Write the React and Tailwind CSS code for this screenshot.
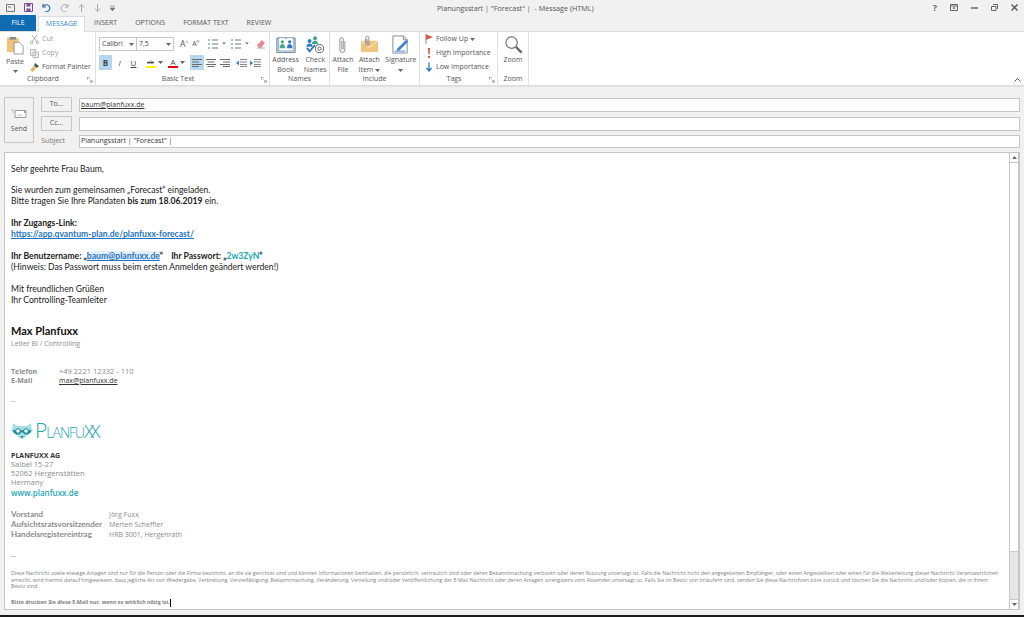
import React from 'react';

const Caret = ({ className = "" }) => (
    <svg width="5" height="3" viewBox="0 0 5 3" className={className}><path d="M0 0h5L2.5 3z" fill="#666" /></svg>
);

// Small launcher in the corner of a ribbon group
const Launcher = () => (
    <svg width="6" height="6" viewBox="0 0 7 7" className="absolute right-[2px] bottom-[2px]">
        <path d="M0.5 3V0.5H3M3 3l3 3M6 3.5V6H3.5" fill="none" stroke="#777" strokeWidth="0.8" />
    </svg>
);

const RibbonGroup = ({ label, width, launcher, children }) => (
    <div className={`relative flex flex-col h-full border-r border-[#e1e1e1] ${width}`}>
        <div className="flex-1 min-h-0">{children}</div>
        <div className={`h-[11px] text-center text-[7px] leading-[10px] text-[#555] ${launcher ? "pr-[9px]" : ""}`}>{label}</div>
        {launcher && <Launcher />}
    </div>
);

const BigLabel = ({ children, caret }) => (
    <div className="text-center text-[7px] leading-[10px] text-[#555] whitespace-nowrap">
        {children}
        {caret && <Caret className="inline ml-[2px] align-middle" />}
    </div>
);

const AddressBookIcon = () => (
    <svg width="20" height="17" viewBox="0 0 22 18">
        <path d="M1 2h20v16H1z" fill="#dce6ee" stroke="#4d6f8f" />
        <path d="M3 1.500h7.500L11 3l.5-1.500H19V16h-7.500L11 17l-.5-1H3z" fill="#fff" stroke="#6d8ba5" strokeWidth="0.7" />
        <circle cx="7" cy="6" r="1.800" fill="#4aa38c" /><path d="M4 13c0-6 6-6 6 0z" fill="#4aa38c" />
        <circle cx="15" cy="6" r="1.800" fill="#3578c4" /><path d="M12 13c0-6 6-6 6 0z" fill="#3578c4" />
    </svg>
);

const CheckNamesIcon = () => (
    <svg width="20" height="20" viewBox="0 0 22 22">
        <circle cx="11" cy="3.500" r="2.200" fill="#3fa58a" /><path d="M7.500 10c0-5 7-5 7 0z" fill="#3fa58a" />
        <circle cx="5" cy="6.500" r="2.200" fill="#2f7cc7" /><path d="M1.500 13c0-5 7-5 7 0z" fill="#2f7cc7" />
        <path d="M2 14l3 4 6-7" fill="none" stroke="#2f6fb2" strokeWidth="2" />
        <circle cx="16" cy="15" r="4.500" fill="none" stroke="#555" /><circle cx="16" cy="15" r="1.800" fill="none" stroke="#555" />
    </svg>
);

const ClipIcon = () => (
    <svg width="11" height="20" viewBox="0 0 14 24">
        <path d="M10 7v11a3.200 3.200 0 0 1-6.400 0V5a2.200 2.200 0 0 1 4.400 0v11a1 1 0 0 1-2 0V7" fill="none" stroke="#9a9a9a" strokeWidth="1.300" />
    </svg>
);

const EnvelopeClipIcon = () => (
    <svg width="19" height="19" viewBox="0 0 20 20">
        <path d="M1 6h18v12H1z" fill="#f0c47c" />
        <path d="M1 6l9 7 9-7" fill="none" stroke="#fff" strokeWidth="0.8" />
        <path d="M6 11V3a1.700 1.700 0 0 1 3.400 0v7a1 1 0 0 1-2 0V4" fill="none" stroke="#8a8a8a" />
    </svg>
);

const SignatureIcon = () => (
    <svg width="19" height="19" viewBox="0 0 20 20">
        <path d="M2 1h11l4 4v14H2z" fill="#fff" stroke="#7c8a96" />
        <path d="M13 1v4h4" fill="none" stroke="#7c8a96" />
        <path d="M7 14L16 5l2 2-9 9-3 1z" fill="#3e84cc" />
        <path d="M4 17h11" stroke="#3e84cc" />
    </svg>
);

const ZoomIcon = () => (
    <svg width="19" height="19" viewBox="0 0 20 20">
        <circle cx="8" cy="8" r="6" fill="#fff" stroke="#777" strokeWidth="1.300" />
        <path d="M12.500 12.500L18.500 18.500" stroke="#666" strokeWidth="2.400" />
    </svg>
);

const PasteIcon = () => (
    <svg width="18" height="20" viewBox="0 0 20 22">
        <path d="M1 3h13v16H1z" fill="#eec47f" />
        <path d="M4 2h7v3H4z" fill="#8a8a8a" />
        <path d="M9 8h6l4 4v9H9z" fill="#fff" stroke="#777" strokeWidth="0.8" />
    </svg>
);

const lineIcon = (rows) => rows.map((r, i) => (
    <path key={i} d={`M${r[0]} ${r[1]}h${r[2]}`} stroke="#6a6a6a" strokeWidth="1" />
));

const Align = ({ rows, active }) => (
    <div className={`w-[14px] h-[15px] flex items-center justify-center ${active ? "bg-[#b5d7f0]" : ""}`}>
        <svg width="10" height="8" viewBox="0 0 10 8">{lineIcon(rows)}</svg>
    </div>
);

const Clipboard = () => (
    <div className="flex pl-[4px]">
        <div className="w-[22px] flex flex-col items-center pt-[3px]">
            <PasteIcon />
            <div className="text-[7px] leading-[10px] text-[#555] mt-[2px]">Paste</div>
            <Caret className="mt-[3px]" />
        </div>
        <div className="ml-[4px] text-[7px] text-[#555] flex flex-col whitespace-nowrap">
            <div className="flex items-center h-[14px] gap-[3px] text-[#9d9d9d]">
                <svg width="9" height="9" viewBox="0 0 9 9"><path d="M2 0l5 7M7 0L2 7" stroke="#aaa" /><circle cx="1.500" cy="7.500" r="1.300" fill="none" stroke="#aaa" /><circle cx="7.500" cy="7.500" r="1.300" fill="none" stroke="#aaa" /></svg>
                Cut
            </div>
            <div className="flex items-center h-[14px] gap-[3px] text-[#9d9d9d]">
                <svg width="9" height="9" viewBox="0 0 9 9"><path d="M.5.5h5v6h-5zM3 3h5.500v5.500H3z" fill="#eee" stroke="#bbb" /></svg>
                Copy
            </div>
            <div className="flex items-center h-[14px] gap-[3px]">
                <svg width="9" height="9" viewBox="0 0 9 9"><path d="M5 0l4 3-2 2-3-2z" fill="#555" /><path d="M4 3l2 2-3 4-3-2z" fill="#e8b45f" /></svg>
                Format Painter
            </div>
        </div>
    </div>
);

const BasicText = () => (
    <div className="flex flex-col pl-[3px] pt-[5px]">
        <div className="flex items-center h-[14px]">
            <div className="w-[38px] h-[14px] border border-[#c6c6c6] flex items-center justify-between px-[2px] text-[7px] text-[#444]">Calibri<Caret /></div>
            <div className="w-[37px] h-[14px] border border-[#c6c6c6] border-l-0 flex items-center justify-between px-[2px] text-[7px] text-[#444]">7,5<Caret /></div>
            <span className="ml-[6px] text-[8.500px] text-[#555]">A<sup className="text-[5px]">^</sup></span>
            <span className="ml-[4px] text-[7px] text-[#555]">A<sup className="text-[5px]">v</sup></span>
            <svg width="44" height="10" viewBox="0 0 44 10" className="ml-[8px]">
                <path d="M1 1h2M1 5h2M1 9h2" stroke="#3d7cc0" />
                <path d="M5 1h6M5 5h6M5 9h6" stroke="#777" />
                <path d="M15 3.500h4l-2 2z" fill="#777" />
                <path d="M24 1h2M24 5h2M24 9h2" stroke="#3d7cc0" />
                <path d="M28 1h6M28 5h6M28 9h6" stroke="#777" />
                <path d="M38 3.500h4l-2 2z" fill="#777" />
            </svg>
            <svg width="10" height="10" viewBox="0 0 10 10" className="ml-[5px]"><path d="M1 6l5-5 3 3-4 5H3z" fill="#e98a9a" /><path d="M1 9h8" stroke="#aaa" /></svg>
        </div>
        <div className="flex items-center h-[15px] mt-[4px] text-[8px] text-[#444]">
            <div className="w-[13px] h-[15px] bg-[#b5d7f0] flex items-center justify-center font-bold">B</div>
            <div className="w-[13px] ml-[1px] text-center italic">I</div>
            <div className="w-[13px] ml-[1px] text-center underline">U</div>
            <div className="ml-[5px] w-[11px] flex flex-col items-center">
                <span className="text-[6px] leading-[8px] line-through text-[#555]">ab</span>
                <span className="w-[10px] h-[2px] bg-[#fff200]" />
            </div>
            <Caret className="ml-[2px]" />
            <div className="ml-[5px] w-[10px] flex flex-col items-center">
                <span className="text-[8px] leading-[9px] text-[#444]">A</span>
                <span className="w-[10px] h-[2px] bg-[#e8000f]" />
            </div>
            <Caret className="ml-[2px]" />
            <div className="ml-[5px]">
                <Align active rows={[[0, .5, 10], [0, 3, 7], [0, 5.5, 10], [0, 7.5, 7]]} />
            </div>
            <Align rows={[[0, .5, 10], [1.500, 3, 7], [0, 5.500, 10], [1.500, 7.500, 7]]} />
            <Align rows={[[0, .5, 10], [3, 3, 7], [0, 5.500, 10], [3, 7.500, 7]]} />
            <svg width="28" height="8" viewBox="0 0 28 8" className="ml-[4px]">
                <path d="M4 .5h7M4 3h7M4 5.500h7M4 7.500h7" stroke="#888" />
                <path d="M0 4l3-2.500v5z" fill="#3d7cc0" />
                <path d="M18 .5h7M18 3h7M18 5.500h7M18 7.500h7" stroke="#888" />
                <path d="M17 4l-3-2.500v5z" fill="#3d7cc0" />
            </svg>
        </div>
    </div>
);

const Tags = () => (
    <div className="flex flex-col pl-[5px] text-[7px] text-[#555] whitespace-nowrap">
        <div className="flex items-center h-[14px] gap-[3px]">
            <svg width="8" height="10" viewBox="0 0 8 10"><path d="M1 0v10" stroke="#888" /><path d="M1 .5l7 2.500-7 3z" fill="#d9573f" /></svg>
            Follow Up<Caret className="-ml-[1px]" />
        </div>
        <div className="flex items-center h-[14px] gap-[3px]">
            <svg width="8" height="10" viewBox="0 0 8 10"><path d="M3 0h2L4.600 6.500H3.400zM3 8h2v2H3z" fill="#d9573f" /></svg>
            High Importance
        </div>
        <div className="flex items-center h-[14px] gap-[3px]">
            <svg width="8" height="10" viewBox="0 0 8 10"><path d="M4 .5v8M1.500 6L4 9l2.500-3" fill="none" stroke="#2f74bd" strokeWidth="1.300" /></svg>
            Low Importance
        </div>
    </div>
);

const Big = ({ icon, children, caret }) => (
    <div className="flex flex-col items-center">
        <div className="h-[21px] flex items-center justify-center">{icon}</div>
        <BigLabel caret={caret}>{children}</BigLabel>
    </div>
);

const Ribbon = () => (
    <div className="relative h-[55px] bg-white border-y border-[#dcdcdc] flex shadow-[0_1px_1px_#e4e4e4] shrink-0">
        <RibbonGroup label="Clipboard" width="w-[96px]" launcher><Clipboard /></RibbonGroup>
        <RibbonGroup label="Basic Text" width="w-[174px]" launcher><BasicText /></RibbonGroup>
        <RibbonGroup label="Names" width="w-[60px]">
            <div className="flex justify-center gap-[5px] pt-[2px]">
                <Big icon={<AddressBookIcon />}>Address<br />Book</Big>
                <Big icon={<CheckNamesIcon />}>Check<br />Names</Big>
            </div>
        </RibbonGroup>
        <RibbonGroup label="Include" width="w-[90px]">
            <div className="flex justify-center gap-[5px] pt-[2px]">
                <Big icon={<ClipIcon />}>Attach<br />File</Big>
                <Big icon={<EnvelopeClipIcon />} caret>Attach<br />Item</Big>
                <Big icon={<SignatureIcon />}>Signature<br /><Caret className="inline" /></Big>
            </div>
        </RibbonGroup>
        <RibbonGroup label="Tags" width="w-[78px]" launcher><Tags /></RibbonGroup>
        <RibbonGroup label="Zoom" width="w-[31px]">
            <div className="flex justify-center pt-[2px]"><Big icon={<ZoomIcon />}>Zoom</Big></div>
        </RibbonGroup>
        <svg width="7" height="4" viewBox="0 0 7 4" className="absolute right-[3px] bottom-[3px]"><path d="M.5 3.500l3-3 3 3" fill="none" stroke="#555" /></svg>
    </div>
);

const TitleBar = () => (
    <div className="relative h-[15px] flex items-center px-[6px] shrink-0">
        <div className="flex items-center gap-[9px]">
            <svg width="9" height="8" viewBox="0 0 9 8"><path d="M.5.5h8v7h-8z" fill="#eee" stroke="#777" /><path d="M2 3h3" stroke="#777" /></svg>
            <svg width="9" height="9" viewBox="0 0 9 9"><path d="M.5.5h8v8h-8z" fill="none" stroke="#7d4a9c" /><path d="M2.500 1h4v2.500h-4zM2.500 5.500h4v3h-4z" fill="#7d4a9c" /></svg>
            <svg width="9" height="9" viewBox="0 0 9 9"><path d="M1 4a3.500 3.500 0 1 1 2 4.500M1 1v3h3" fill="none" stroke="#2f6fb2" strokeWidth="1.200" /></svg>
            <svg width="9" height="9" viewBox="0 0 9 9"><path d="M8 4a3.500 3.500 0 1 0-2 4.500M8 1v3H5" fill="none" stroke="#aaa" /></svg>
            <svg width="7" height="8" viewBox="0 0 7 8"><path d="M3.500 8V1M1 3.500l2.500-3 2.500 3" fill="none" stroke="#aaa" /></svg>
            <svg width="7" height="8" viewBox="0 0 7 8"><path d="M3.500 0v7M1 4.500l2.500 3 2.500-3" fill="none" stroke="#aaa" /></svg>
            <svg width="5" height="6" viewBox="0 0 5 6"><path d="M0 1h5M0 3h5l-2.500 3z" stroke="#777" fill="#777" strokeWidth="0.6" /></svg>
        </div>
        <div className="absolute left-[437px] top-[1px] text-[7.200px] leading-[14px] text-[#555] whitespace-pre">Planungsstart | "Forecast" |  - Message (HTML)</div>
        <div className="ml-auto flex items-center gap-[13px] text-[#666]">
            <span className="text-[9px] font-bold leading-[9px]">?</span>
            <svg width="8" height="7" viewBox="0 0 8 7"><path d="M.5.5h7v6h-7z" fill="none" stroke="#666" /><path d="M.5 2h7" stroke="#666" /><path d="M4 3v2M3 4h2" stroke="#666" /></svg>
            <svg width="7" height="2" viewBox="0 0 7 2"><path d="M0 1h7" stroke="#666" strokeWidth="1.500" /></svg>
            <svg width="7" height="7" viewBox="0 0 7 7"><path d="M2 .5h4.500v4.500M.5 2.500h4.500v4h-4.500z" fill="none" stroke="#666" /></svg>
            <svg width="7" height="7" viewBox="0 0 7 7"><path d="M.5.5l6 6M6.500.5l-6 6" stroke="#555" strokeWidth="1.400" /></svg>
        </div>
    </div>
);

const TabBar = () => (
    <div className="flex h-[16px] items-end text-[7px] text-[#555] shrink-0">
        <div className="w-[36px] h-[16px] bg-[#0f6cb3] text-white flex items-center justify-center">FILE</div>
        <div className="ml-[2px] w-[47px] h-[16px] -mb-[1px] bg-white border border-b-0 border-[#dcdcdc] text-[#2f86d0] flex items-center justify-center z-10">MESSAGE</div>
        {["INSERT", "OPTIONS", "FORMAT TEXT", "REVIEW"].map((t, i) => (
            <div key={t} className={`h-[16px] flex items-center ${["ml-[9px]", "ml-[18px]", "ml-[18px]", "ml-[18px]"][i]}`}>{t}</div>
        ))}
    </div>
);

const FieldButton = ({ children, className = "" }) => (
    <div className={`w-[31px] h-[15px] border border-[#c6c6c6] text-[7px] text-[#555] flex items-center justify-center ${className}`}>{children}</div>
);

const Field = ({ className = "", children }) => (
    <div className={`flex-1 bg-white border border-[#c6c6c6] px-[1px] text-[7px] leading-[12px] text-[#333] flex items-center ${className}`}>{children}</div>
);

const Header = () => (
    <div className="flex pl-[4px] pr-[4px] pt-[11px] shrink-0">
        <div className="w-[30px] h-[46px] border border-[#c6c6c6] flex flex-col items-center text-[#555]">
            <svg width="16" height="10" viewBox="0 0 16 10" className="mt-[11px]"><path d="M4 1.500h11v7H4z" fill="#fff" stroke="#999" /><path d="M6 6h5" stroke="#bbb" /><path d="M13 3h1" stroke="#3d7cc0" strokeWidth="1.500" /><path d="M0 1h3M1 3h2" stroke="#bbb" /></svg>
            <div className="text-[7px] leading-[10px] mt-[5px]">Send</div>
        </div>
        <div className="flex-1 ml-[7px] flex flex-col">
            <div className="flex items-center h-[15px]">
                <FieldButton>To...</FieldButton>
                <Field className="ml-[7px] h-[14px]"><span className="underline">baum@planfuxx.de</span></Field>
            </div>
            <div className="flex items-center h-[15px] mt-[4px]">
                <FieldButton>Cc...</FieldButton>
                <Field className="ml-[7px] h-[14px]" />
            </div>
            <div className="flex items-center h-[14px] mt-[3px]">
                <div className="w-[31px] text-[7px] text-[#777]">Subject</div>
                <Field className="ml-[7px] h-[13px]">Planungsstart | "Forecast" |</Field>
            </div>
        </div>
    </div>
);

const Logo = () => (
    <div className="flex items-center h-[20px]">
        <svg width="22" height="18" viewBox="0 0 22 18">
            <path d="M2 1l4 3h10l4-3 .5 5L22 9l-3 2-7 6h-2l-7-6-3-2 1.500-3z" fill="#a5e0e5" />
            <path d="M2 8h18v2l-3 2.500h-3L11 10l-3 2.500H5L2 10z" fill="#1a9aa8" />
            <circle cx="7" cy="9" r="2.300" fill="#fff" stroke="#1a7f8c" /><circle cx="15" cy="9" r="2.300" fill="#fff" stroke="#1a7f8c" />
            <path d="M9.500 14h3L11 16z" fill="#1a5f6a" />
        </svg>
        <span className="ml-[2px] text-[#1fa5b5] text-[21px] leading-[20px] tracking-[-1px] font-light whitespace-nowrap">P<span className="text-[14px]">LANFU</span><span className="text-[19px] tracking-[-4px]">XX</span></span>
    </div>
);

const Scrollbar = () => (
    <div className="w-[10px] bg-[#e6e6e6] border-x border-[#c6c6c6] flex flex-col">
        <div className="h-[10px] border-b border-[#c6c6c6] bg-white flex items-center justify-center shrink-0"><svg width="5" height="3" viewBox="0 0 5 3"><path d="M0 3h5L2.500 0z" fill="#666" /></svg></div>
        <div className="h-[389px] bg-white border-b border-[#c6c6c6] shrink-0" />
        <div className="flex-1" />
        <div className="h-[10px] border-t border-[#c6c6c6] bg-white flex items-center justify-center shrink-0"><Caret /></div>
    </div>
);

const Body = () => (
    <div className="flex-1 min-h-0 mx-[4px] mt-[4px] bg-white border border-[#c6c6c6] flex">
        <div className="flex-1 min-w-0 pl-[6px] pt-[11px] text-[8.600px] leading-[11px] text-[#222] [font-family:Lato,sans-serif]">
            <p>Sehr geehrte Frau Baum,</p>
            <p className="mt-[10px]">Sie wurden zum gemeinsamen „Forecast“ eingeladen.</p>
            <p>Bitte tragen Sie Ihre Plandaten <b>bis zum 18.06.2019</b> ein.</p>
            <p className="mt-[11px] font-bold">Ihr Zugangs-Link:</p>
            <p className="font-bold text-[#1f74c4] underline">https://app.qvantum-plan.de/planfuxx-forecast/</p>
            <p className="mt-[11px] font-bold">Ihr Benutzername: „<span className="text-[#1f74c4] bg-[#e3eef9] underline">baum@planfuxx.de</span>“ <span className="ml-[6px]">Ihr Passwort: „<span className="text-[#1aa5b5]">2w3ZyN</span>“</span></p>
            <p>(Hinweis: Das Passwort muss beim ersten Anmelden geändert werden!)</p>
            <p className="mt-[11px]">Mit freundlichen Grüßen</p>
            <p>Ihr Controlling-Teamleiter</p>
            <p className="mt-[18px] text-[11px] leading-[14px] font-bold text-[#111]">Max Planfuxx</p>
            <p className="text-[7px] leading-[10px] mt-[1px] text-[#8c8c8c] [font-family:'Open_Sans',sans-serif]">Leiter BI / Controlling</p>
            <div className="mt-[18px] text-[7px] leading-[9px] text-[#8c8c8c] [font-family:'Open_Sans',sans-serif]">
                <div className="flex"><b className="w-[48px]">Telefon</b><span className="text-[7.500px]">+49 2221 12332 - 110</span></div>
                <div className="flex"><b className="w-[48px]">E-Mail</b><span className="text-[#333] underline">max@planfuxx.de</span></div>
                <p className="mt-[11px] leading-[9px]">--</p>
                <div className="mt-[16px]"><Logo /></div>
                <p className="mt-[10px] font-bold text-[#333]">PLANFUXX AG</p>
                <p className="text-[7.500px]">Saibel 15-27</p>
                <p className="text-[7.500px]">52062 Hergenstätten</p>
                <p className="text-[7.500px]">Hermany</p>
                <p className="text-[8px] leading-[11px] font-semibold text-[#1fa5b5]">www.planfuxx.de</p>
                <div className="mt-[11px] flex flex-col">
                    <div className="flex h-[10px] items-center"><b className="w-[98px] text-[8px] [font-family:Lato,sans-serif]">Vorstand</b>Jörg Fuxx</div>
                    <div className="flex h-[10px] items-center"><b className="w-[98px] text-[8px] [font-family:Lato,sans-serif]">Aufsichtsratsvorsitzender</b>Merten Scheffler</div>
                    <div className="flex h-[11px] items-center"><b className="w-[98px] text-[8px] [font-family:Lato,sans-serif]">Handelsregistereintrag</b>HRB 3001, Hergenrath</div>
                </div>
                <p className="mt-[11px] leading-[9px]">--</p>
            </div>
            <div className="mt-[10px] w-[988px] text-[5.250px] leading-[6.500px] text-[#808080] [font-family:'Open_Sans',sans-serif]">
                Diese Nachricht sowie etwaige Anlagen sind nur für die Person oder die Firma bestimmt, an die sie gerichtet sind und können Informationen beinhalten, die persönlich, vertraulich sind oder deren Bekanntmachung verboten oder deren Nutzung untersagt ist. Falls die Nachricht nicht den angegebenen Empfänger, oder einen Angestellten oder einen für die Weiterleitung dieser Nachricht Verantwortlichen erreicht, wird hiermit darauf hingewiesen, dass jegliche Art von Wiedergabe, Verbreitung, Vervielfältigung, Bekanntmachung, Veränderung, Verteilung und/oder Veröffentlichung der E-Mail Nachricht oder deren Anlagen strengstens vom Absender untersagt ist. Falls Sie im Besitz von Irrläufern sind, senden Sie diese Nachrichten bitte zurück und löschen Sie die Nachricht und/oder Kopien, die in Ihrem Besitz sind.
            </div>
            <div className="mt-[9px] text-[5.250px] leading-[7px] font-bold text-[#808080] [font-family:'Open_Sans',sans-serif]">
                Bitte drucken Sie diese E-Mail nur, wenn es wirklich nötig ist.<span className="inline-block w-[1px] h-[8px] bg-black align-middle" />
            </div>
        </div>
        <Scrollbar />
    </div>
);

const App = () => (
    <div className="w-[1024px] h-[617px] overflow-hidden bg-[#f1f1f1] flex flex-col [font-family:'Open_Sans',sans-serif]">
        <TitleBar />
        <TabBar />
        <Ribbon />
        <Header />
        <Body />
        <div className="h-[5px] shrink-0" />
        <div className="h-[2px] bg-[#1a1a1a] shrink-0" />
    </div>
);

export default App;
